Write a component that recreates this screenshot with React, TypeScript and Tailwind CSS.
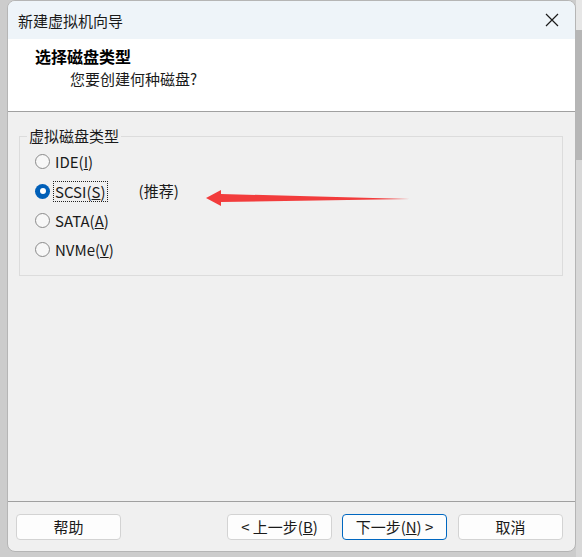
import React from 'react';

const font = { fontFamily: '"Noto Sans CJK SC", "Noto Sans", sans-serif' };

function Radio({ checked }: { checked?: boolean }) {
  return checked ? (
    <span className="flex h-[15px] w-[15px] items-center justify-center rounded-full bg-[#005fb8]">
      <span className="h-[6px] w-[6px] rounded-full bg-white" />
    </span>
  ) : (
    <span className="h-[15px] w-[15px] rounded-full border border-[#8a8a8a] bg-[#f7f7f7]" />
  );
}

function Option({
  label,
  hot,
  checked,
  focus,
  extra,
}: {
  label: string;
  hot: string;
  checked?: boolean;
  focus?: boolean;
  extra?: string;
}) {
  return (
    <div className="flex h-[29.4px] items-center pl-[15px]">
      <Radio checked={checked} />
      <span
        className={
          'ml-[4px] px-[1px] leading-[19px] ' +
          (focus ? 'outline outline-1 outline-dotted outline-[#222]' : '')
        }
      >
        {label}(<u>{hot}</u>)
      </span>
      {extra && <span className="ml-[32px]">{extra}</span>}
    </div>
  );
}

function Btn({
  children,
  primary,
}: {
  children: React.ReactNode;
  primary?: boolean;
}) {
  return (
    <button
      className={
        'flex h-[26px] w-[105px] items-center justify-center rounded-[4px] bg-[#fdfdfd] text-[15px] text-[#1a1a1a] ' +
        (primary ? 'border border-[#0067c0]' : 'border border-[#d3d3d3]')
      }
    >
      {children}
    </button>
  );
}

export default function App() {
  return (
    <div
      className="flex h-[557px] w-[582px] overflow-hidden bg-[#cccccc] text-[#1a1a1a]"
      style={font}
    >
      <div className="w-[7px] shrink-0" />

      {/* window */}
      <div className="relative flex h-[552px] w-[569px] shrink-0 flex-col overflow-hidden rounded-[8px] border border-[#b5b5b5] bg-[#f0f0f0]">
        {/* title bar */}
        <div className="flex h-[38px] shrink-0 items-center justify-between bg-[#eef4f9] pl-[10px] pr-[16px]">
          <span className="text-[15px] leading-none">新建虚拟机向导</span>
          <svg width="14" height="14" viewBox="0 0 14 14">
            <path d="M1 1L13 13M13 1L1 13" stroke="#1a1a1a" strokeWidth="1.2" />
          </svg>
        </div>

        {/* header */}
        <div className="flex h-[73px] shrink-0 flex-col border-b border-[#a0a0a0] bg-white pl-[27px] pt-[6px]">
          <span className="text-[16px] font-bold leading-[22px] text-black">选择磁盘类型</span>
          <span className="pl-[35px] pt-[2px] text-[15px] leading-[20px]">您要创建何种磁盘?</span>
        </div>

        {/* body */}
        <div className="flex flex-1 flex-col pl-[11px] pr-[12px] pt-[24px] text-[15px]">
          <div className="relative h-[140px] border border-[#dcdcdc] pt-[10px]">
            <span className="absolute left-[7px] top-[-11px] bg-[#f0f0f0] px-[2px] leading-[20px]">
              虚拟磁盘类型
            </span>
            <Option label="IDE" hot="I" />
            <Option label="SCSI" hot="S" checked focus extra="(推荐)" />
            <Option label="SATA" hot="A" />
            <Option label="NVMe" hot="V" />
          </div>
        </div>

        {/* footer */}
        <div className="flex h-[50px] shrink-0 items-start border-t border-[#a0a0a0] pl-[8px] pr-[11px] pt-[12px]">
          <Btn>帮助</Btn>
          <div className="flex-1" />
          <div className="flex gap-[10px]">
            <Btn>&lt; 上一步(<u>B</u>)</Btn>
            <Btn primary>
              下一步(<u>N</u>) &gt;
            </Btn>
          </div>
          <div className="w-[11px]" />
          <Btn>取消</Btn>
          <div className="w-[1px]" />
        </div>

        {/* annotation arrow */}
        <svg
          className="absolute left-[190px] top-[180px]"
          width="220"
          height="30"
          viewBox="0 0 220 30"
        >
          <polygon
            points="8,17 23,9 23,13 212,18 23,21 23,25"
            fill="#f23c3c"
          />
        </svg>
      </div>

      {/* right backdrop */}
      <div className="flex w-[6px] shrink-0 flex-col">
        <div className="h-[30px] bg-[#e6e6e6]" />
        <div className="h-[130px] bg-[#b6b6b6]" />
        <div className="flex-1 bg-[#d8d8d8]" />
      </div>
    </div>
  );
}
